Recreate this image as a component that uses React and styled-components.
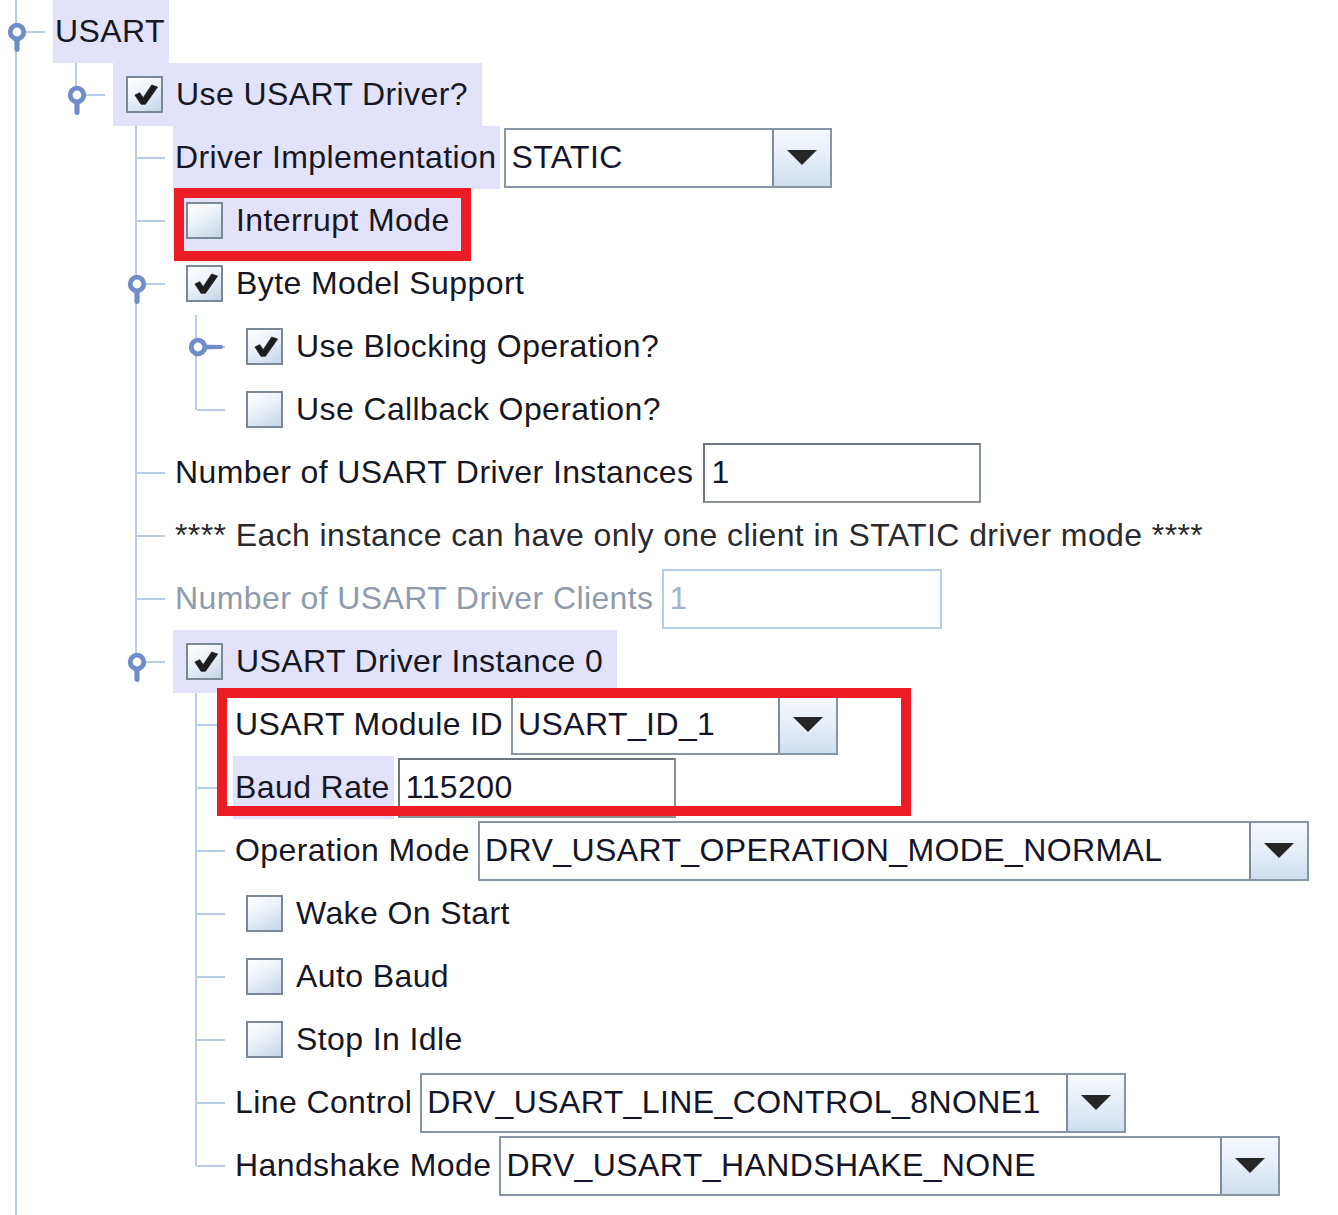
import React from "react";
import styled, { createGlobalStyle } from "styled-components";

const LINE = "#b9cde6";
const HANDLE = "#6f8dc8";
const LAVENDER = "#e2e2fb";
const RED = "#ec1c24";

const GlobalStyle = createGlobalStyle`
  html, body {
    margin: 0;
    padding: 0;
    background: #ffffff;
  }
  body {
    font-family: "Liberation Sans", Arial, sans-serif;
  }
`;

const Tree = styled.div`
  width: 1338px;
  min-height: 1215px;
  display: flex;
  flex-direction: column;
  overflow: hidden;
  font-size: 32px;
  letter-spacing: 0.4px;
  color: #171724;
`;

const Row = styled.div`
  display: flex;
  align-items: stretch;
  height: 63px;
  white-space: nowrap;
`;

const Filler = styled.div`
  display: flex;
  flex: 1;
`;

// vertical guide line of an ancestor level
const Guide = styled.div`
  flex: 0 0 43px;
  margin-left: 15px;
  border-left: 2px solid ${(p) => (p.$on ? LINE : "transparent")};
`;

const Connector = styled.div`
  flex: 0 0 53px;
  display: grid;
  grid-template-columns: 15px 2px 28px 1fr;
  grid-template-rows: 1fr 1fr;
`;

const Stem = styled.div`
  grid-column: 2;
  grid-row: ${(p) => (p.$last ? "1" : "1 / 3")};
  background: ${LINE};
`;

const Arm = styled.div`
  grid-column: 3;
  grid-row: 2;
  margin-top: -1px;
  border-top: 2px solid ${LINE};
`;

const HandleIcon = styled.svg`
  grid-column: 1 / 4;
  grid-row: 1 / 3;
  align-self: center;
  justify-self: start;
  margin-left: ${(p) => (p.$closed ? "6px" : "5px")};
  z-index: 1;
`;

const Cell = styled.div`
  position: relative;
  display: flex;
  align-items: center;
  background: ${(p) => (p.$hl ? LAVENDER : "transparent")};
  color: ${(p) => (p.$disabled ? "#8f9bab" : p.$note ? "#2b2b2f" : "inherit")};
  ${(p) =>
    p.$marked &&
    `
    &::after {
      content: "";
      position: absolute;
      left: 1px;
      top: -1px;
      width: 297px;
      height: 73px;
      box-sizing: border-box;
      border: 10px solid ${RED};
      pointer-events: none;
    }
  `}
`;

const CheckCell = styled(Cell)`
  gap: 13px;
  padding: 0 14px 0 13px;
`;

const LabelCell = styled(Cell)`
  padding: 0 4px 0 2px;
`;

const Box = styled.span`
  flex: 0 0 auto;
  width: 33px;
  height: 33px;
  border: 2px solid #7b8896;
  background: linear-gradient(150deg, #ffffff 0%, #eef3f9 40%, #c5d5e8 100%);
  display: flex;
  align-items: center;
  justify-content: center;
`;

const Tick = styled.svg`
  margin-left: 3px;
`;

const Combo = styled.div`
  align-self: center;
  box-sizing: border-box;
  width: ${(p) => p.$w}px;
  height: 60px;
  margin-left: 4px;
  display: flex;
  border: 2px solid #8795a4;
  background: #ffffff;
`;

const ComboValue = styled.div`
  flex: 1;
  display: flex;
  align-items: center;
  padding-left: 5px;
  color: #15152a;
  border-right: 2px solid #7d8b9b;
`;

const ComboButton = styled.div`
  flex: 0 0 56px;
  display: flex;
  align-items: center;
  justify-content: center;
  background: linear-gradient(to bottom, #f5f8fc 0%, #e6eef7 50%, #cfdeee 100%);
`;

const Field = styled.div`
  align-self: center;
  box-sizing: border-box;
  width: ${(p) => p.$w}px;
  height: 60px;
  margin-left: ${(p) => p.$gap || 4}px;
  display: flex;
  align-items: center;
  padding-left: 6px;
  background: #ffffff;
  border: 2px solid ${(p) => (p.$disabled ? "#b7cde8" : "#8d9298")};
  border-top-color: ${(p) => (p.$disabled ? "#b7cde8" : "#6e747b")};
  border-left-color: ${(p) => (p.$disabled ? "#b7cde8" : "#6e747b")};
  color: ${(p) => (p.$disabled ? "#a4b6ce" : "#15152a")};
`;

const MarkedGroup = styled.div`
  position: relative;
  &::after {
    content: "";
    position: absolute;
    left: 217px;
    top: -5px;
    width: 694px;
    height: 128px;
    box-sizing: border-box;
    border: 10px solid ${RED};
    pointer-events: none;
  }
`;

const OpenHandle = () => (
  <HandleIcon width="24" height="46" viewBox="0 0 24 46">
    <rect x="9.4" y="24" width="5.2" height="19" rx="2.4" fill={HANDLE} />
    <circle cx="12" cy="23" r="6.8" fill="#ffffff" stroke={HANDLE} strokeWidth="4.8" />
  </HandleIcon>
);

const ClosedHandle = () => (
  <HandleIcon $closed width="40" height="24" viewBox="0 0 40 24">
    <path d="M14 9.4 L36 10 Q38 12 36 14 L14 14.6 Z" fill={HANDLE} />
    <circle cx="12" cy="12" r="6.8" fill="#ffffff" stroke={HANDLE} strokeWidth="4.8" />
  </HandleIcon>
);

const CheckMark = () => (
  <Tick width="24" height="21" viewBox="0 0 26 22">
    <path
      d="M1 11.6 L6.2 9 L10 14.4 L19.2 0.6 L25.6 3 L12.4 21.6 L7.6 21.6 Z"
      fill="#1c1c1c"
      stroke="#1c1c1c"
      strokeWidth="0.8"
      strokeLinejoin="round"
    />
  </Tick>
);

const Arrow = () => (
  <svg width="30" height="15" viewBox="0 0 30 15">
    <polygon points="0,0 30,0 15,15" fill="#262626" />
  </svg>
);

const rows = [
  { guides: [], handle: "open", kind: "label", text: "USART", hl: true },
  { guides: [1], last: true, handle: "open", kind: "check", checked: true, text: "Use USART Driver?", hl: true },
  { guides: [1, 0], kind: "combo", text: "Driver Implementation", value: "STATIC", w: 328, hl: true },
  { guides: [1, 0], kind: "check", text: "Interrupt Mode", hl: true, marked: true },
  { guides: [1, 0], handle: "open", kind: "check", checked: true, text: "Byte Model Support" },
  { guides: [1, 0, 1], handle: "closed", kind: "check", checked: true, text: "Use Blocking Operation?" },
  { guides: [1, 0, 1], last: true, kind: "check", text: "Use Callback Operation?" },
  { guides: [1, 0], kind: "field", text: "Number of USART Driver Instances", value: "1", w: 278, gap: 6 },
  { guides: [1, 0], kind: "note", text: "**** Each instance can have only one client in STATIC driver mode ****" },
  { guides: [1, 0], kind: "field", disabled: true, text: "Number of USART Driver Clients", value: "1", w: 280, gap: 4 },
  { guides: [1, 0], last: true, handle: "open", kind: "check", checked: true, text: "USART Driver Instance 0", hl: true },
  { guides: [1, 0, 0], kind: "combo", text: "USART Module ID", value: "USART_ID_1", w: 327 },
  { guides: [1, 0, 0], kind: "field", text: "Baud Rate", value: "115200", w: 278, hl: true },
  { guides: [1, 0, 0], kind: "combo", text: "Operation Mode", value: "DRV_USART_OPERATION_MODE_NORMAL", w: 831 },
  { guides: [1, 0, 0], kind: "check", text: "Wake On Start" },
  { guides: [1, 0, 0], kind: "check", text: "Auto Baud" },
  { guides: [1, 0, 0], kind: "check", text: "Stop In Idle" },
  { guides: [1, 0, 0], kind: "combo", text: "Line Control", value: "DRV_USART_LINE_CONTROL_8NONE1", w: 706 },
  { guides: [1, 0, 0], last: true, kind: "combo", text: "Handshake Mode", value: "DRV_USART_HANDSHAKE_NONE", w: 781 },
];

const TreeRow = ({ row }) => {
  let content;
  if (row.kind === "check") {
    content = (
      <CheckCell $hl={row.hl} $marked={row.marked}>
        <Box>{row.checked && <CheckMark />}</Box>
        {row.text}
      </CheckCell>
    );
  } else {
    content = (
      <>
        <LabelCell $hl={row.hl} $disabled={row.disabled} $note={row.kind === "note"}>
          {row.text}
        </LabelCell>
        {row.kind === "combo" && (
          <Combo $w={row.w}>
            <ComboValue>{row.value}</ComboValue>
            <ComboButton>
              <Arrow />
            </ComboButton>
          </Combo>
        )}
        {row.kind === "field" && (
          <Field $w={row.w} $gap={row.gap} $disabled={row.disabled}>
            {row.value}
          </Field>
        )}
      </>
    );
  }

  return (
    <Row>
      {row.guides.map((on, i) => (
        <Guide key={i} $on={on} />
      ))}
      <Connector>
        <Stem $last={row.last} />
        <Arm />
        {row.handle === "open" && <OpenHandle />}
        {row.handle === "closed" && <ClosedHandle />}
      </Connector>
      {content}
    </Row>
  );
};

export default function App() {
  return (
    <>
      <GlobalStyle />
      <Tree>
        {rows.slice(0, 11).map((row, i) => (
          <TreeRow key={i} row={row} />
        ))}
        <MarkedGroup>
          {rows.slice(11, 13).map((row, i) => (
            <TreeRow key={i} row={row} />
          ))}
        </MarkedGroup>
        {rows.slice(13).map((row, i) => (
          <TreeRow key={i} row={row} />
        ))}
        <Filler>
          <Guide $on />
        </Filler>
      </Tree>
    </>
  );
}
